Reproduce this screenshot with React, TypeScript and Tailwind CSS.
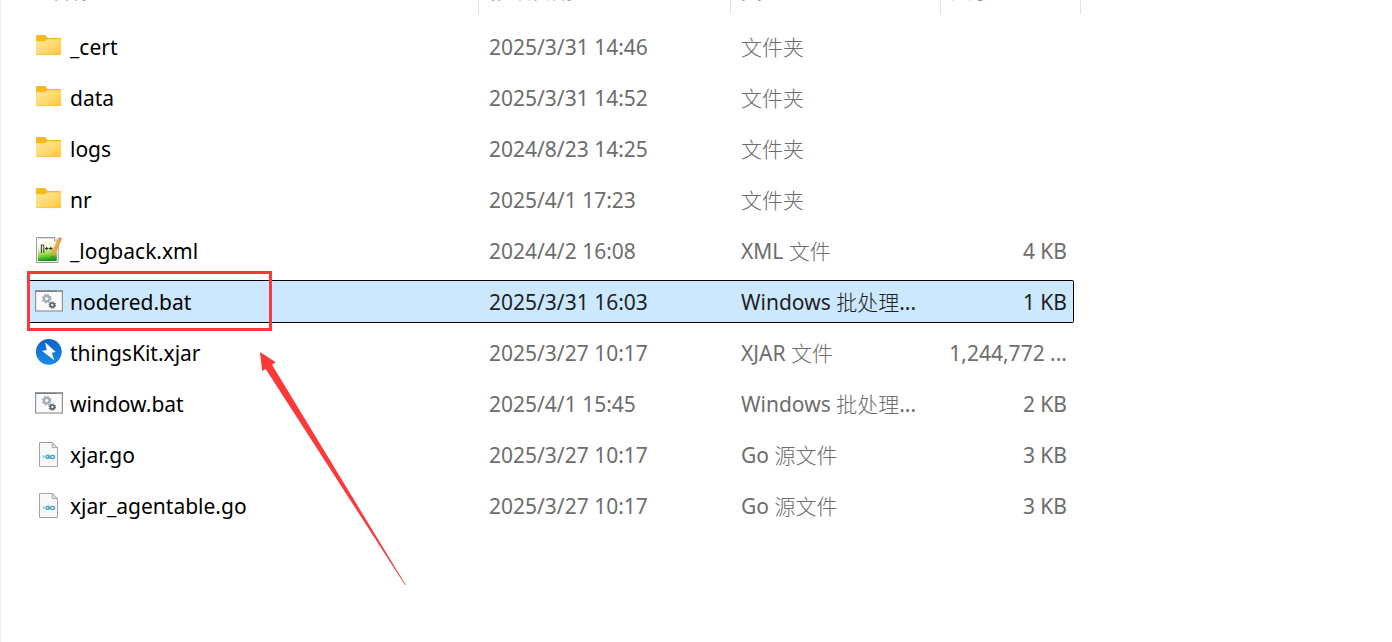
import React from 'react';

type Kind = 'folder' | 'xml' | 'bat' | 'jar' | 'go';

interface Entry {
  name: string;
  modified: string;
  type: string;
  size: string;
  kind: Kind;
  selected?: boolean;
}

const entries: Entry[] = [
  { name: '_cert', modified: '2025/3/31 14:46', type: '文件夹', size: '', kind: 'folder' },
  { name: 'data', modified: '2025/3/31 14:52', type: '文件夹', size: '', kind: 'folder' },
  { name: 'logs', modified: '2024/8/23 14:25', type: '文件夹', size: '', kind: 'folder' },
  { name: 'nr', modified: '2025/4/1 17:23', type: '文件夹', size: '', kind: 'folder' },
  { name: '_logback.xml', modified: '2024/4/2 16:08', type: 'XML 文件', size: '4 KB', kind: 'xml' },
  { name: 'nodered.bat', modified: '2025/3/31 16:03', type: 'Windows 批处理...', size: '1 KB', kind: 'bat', selected: true },
  { name: 'thingsKit.xjar', modified: '2025/3/27 10:17', type: 'XJAR 文件', size: '1,244,772 ...', kind: 'jar' },
  { name: 'window.bat', modified: '2025/4/1 15:45', type: 'Windows 批处理...', size: '2 KB', kind: 'bat' },
  { name: 'xjar.go', modified: '2025/3/27 10:17', type: 'Go 源文件', size: '3 KB', kind: 'go' },
  { name: 'xjar_agentable.go', modified: '2025/3/27 10:17', type: 'Go 源文件', size: '3 KB', kind: 'go' },
];

function FolderIcon() {
  return (
    <svg className="h-7 w-7" viewBox="0 0 28 28" aria-hidden="true">
      <defs>
        <linearGradient id="folderFront" x1="0" y1="0" x2="1" y2="1">
          <stop offset="0" stopColor="#ffe7a0" />
          <stop offset="0.55" stopColor="#ffd96f" />
          <stop offset="1" stopColor="#fec52f" />
        </linearGradient>
      </defs>
      <path d="M1 4.2Q1 3 2.2 3H9.4Q10.3 3 11 3.7L12.6 5.9H24.8Q26 5.9 26 7V20H1Z" fill="#f8b81e" />
      <path d="M1 9.2H9.6Q10.4 9.2 11 8.6L12.4 7.2H24.8Q26 7.2 26 8.2V21.8Q26 23 24.8 23H2.2Q1 23 1 21.8Z" fill="url(#folderFront)" />
      <path d="M1.4 22.6H25.6" stroke="#f1c04a" strokeWidth="0.8" />
    </svg>
  );
}

function XmlIcon() {
  return (
    <svg className="h-7 w-7" viewBox="0 0 28 28" aria-hidden="true">
      <defs>
        <linearGradient id="xmlPage" x1="0" y1="0" x2="0.15" y2="1">
          <stop offset="0" stopColor="#ffffff" />
          <stop offset="0.35" stopColor="#f2f9df" />
          <stop offset="0.65" stopColor="#a5e052" />
          <stop offset="0.88" stopColor="#45bd25" />
          <stop offset="1" stopColor="#169a17" />
        </linearGradient>
      </defs>
      <path d="M1.5 1.5H20L23.2 5V26.5H1.5Z" fill="#fff" stroke="#9a9d9a" />
      <path d="M3 5H21.8V25H3Z" fill="url(#xmlPage)" />
      <path d="M3 2.4H19.5" stroke="#aaa" strokeWidth="1" strokeDasharray="1 1.3" />
      <path d="M19.5 1.5V5H23" fill="#eee" stroke="#999" strokeWidth="0.8" />
      <path d="M6.4 17V8.5M6.4 9H7.7Q8.8 9 8.8 10.2V17" fill="none" stroke="#444" strokeWidth="1.1" />
      <path d="M10 12.5H13.4M11.7 10.8V14.2M14.1 12.5H17.5M15.8 10.8V14.2" stroke="#263426" strokeWidth="1" />
      <path d="M23.6 2.6 26.2 4 19.8 18.2 17 21.4 16.9 17Z" fill="#f4a93c" stroke="#d0923c" strokeWidth="0.6" />
      <path d="M23.6 2.6 24.4 1 27 2.4 26.2 4Z" fill="#dd7468" />
      <path d="M17.1 19.4 17 21.4 18.3 20Z" fill="#333" />
    </svg>
  );
}

function BatIcon() {
  return (
    <svg className="h-7 w-7" viewBox="0 0 28 28" aria-hidden="true">
      <rect x="0.6" y="4" width="26.8" height="20" fill="#fafafa" stroke="#929496" strokeWidth="1.2" />
      <path d="M0 4.2H28" stroke="#7c7e80" strokeWidth="1.6" />
      <path d="M22 4.2H26.5" stroke="#d4d4d4" strokeWidth="0.9" strokeDasharray="1 0.8" />
      <circle cx="11.7" cy="11.6" r="2.8" fill="none" stroke="#a5aeb7" strokeWidth="2.2" />
      <circle cx="11.7" cy="11.6" r="4.2" fill="none" stroke="#a5aeb7" strokeWidth="1.4" strokeDasharray="1.8 1.5" />
      <circle cx="17.3" cy="18" r="2" fill="none" stroke="#5b646c" strokeWidth="1.7" />
      <circle cx="17.3" cy="18" r="3.1" fill="none" stroke="#5b646c" strokeWidth="1.2" strokeDasharray="1.35 1.08" />
    </svg>
  );
}

function JarIcon() {
  return (
    <svg className="h-7 w-7" viewBox="0 0 28 28" aria-hidden="true">
      <defs>
        <linearGradient id="jarDisc" x1="0" y1="0" x2="0" y2="1">
          <stop offset="0" stopColor="#0a62c4" />
          <stop offset="1" stopColor="#1a8be6" />
        </linearGradient>
      </defs>
      <circle cx="13.8" cy="13.8" r="12.9" fill="url(#jarDisc)" />
      <path d="M10 4.2 20.8 14.1 16.8 14.8 19.3 22.2 7 12.9 11.7 12Z" fill="#fff" />
    </svg>
  );
}

function GoIcon() {
  return (
    <svg className="h-7 w-7" viewBox="0 0 28 28" aria-hidden="true">
      <path d="M4.5 2.5H17.2L22.5 7.6V26.5H4.5Z" fill="#f7f8f8" stroke="#a1a4a6" />
      <path d="M17.2 2.5V7.6H22.5Z" fill="#dfe1e2" stroke="#a1a4a6" strokeWidth="0.9" />
      <path d="M7.3 16H10M8 17.3H10" stroke="#7ebcd4" strokeWidth="0.9" />
      <path d="M14.4 15.6Q13.4 14.9 12.2 15.3Q10.9 15.9 11 17.1Q11.2 18.4 12.8 18.4Q14.4 18.3 14.6 16.9H12.8" fill="none" stroke="#419fc0" strokeWidth="1.3" />
      <ellipse cx="17.5" cy="16.9" rx="2" ry="1.6" fill="none" stroke="#419fc0" strokeWidth="1.3" />
    </svg>
  );
}

const icons: Record<Kind, () => React.ReactElement> = {
  folder: FolderIcon,
  xml: XmlIcon,
  bat: BatIcon,
  jar: JarIcon,
  go: GoIcon,
};

function HeaderCell({ label, indent, span }: { label: string; indent: string; span?: number }) {
  return (
    <th scope="col" colSpan={span} className="h-[49px] p-0 text-left align-top font-normal">
      <div className={`h-[46px] border-r border-[#e3e3e3] pt-[7px] ${indent}`}>{label}</div>
    </th>
  );
}

function Row({ entry }: { entry: Entry }) {
  const Icon = icons[entry.kind];
  const selected = entry.selected;
  const fill = selected ? 'border-y border-black bg-[#cce8ff] text-[#1f1f1f]' : 'text-[#6d6d6d]';
  return (
    <tr aria-selected={selected ? true : undefined}>
      <td className={`relative h-[43px] p-0 pl-[7px] ${fill}`}>
        <div className="flex items-center gap-[7px] text-black">
          <span className="pb-0.5">
            <Icon />
          </span>
          <span>{entry.name}</span>
        </div>
        {selected && <div className="absolute -top-[10px] -left-px h-[60px] w-[245px] border-3 border-[#fd3838]" />}
      </td>
      <td className={`p-0 pl-2.5 ${fill}`}>{entry.modified}</td>
      <td className={`p-0 pl-2.5 ${fill}`}>{entry.type}</td>
      <td className={`p-0 text-right ${fill} ${selected ? 'rounded-r-xs border-r pr-1.5' : 'pr-[7px]'}`}>{entry.size}</td>
      <td className="p-0" />
    </tr>
  );
}

export default function App() {
  return (
    <main className="min-h-screen overflow-hidden border-l border-[#f3f3f3] bg-white pl-[27px] font-['Noto_Sans','Noto_Sans_CJK_SC_Light','Noto_Sans_CJK_SC',sans-serif] text-[21px] leading-7">
      <div className="relative">
        <table className="-mt-10 w-[1053px] table-fixed border-separate border-spacing-x-0 border-spacing-y-2 whitespace-nowrap">
          <colgroup>
            <col className="w-[451px]" />
            <col className="w-[252px]" />
            <col className="w-[210px]" />
            <col className="w-[133px]" />
            <col className="w-[7px]" />
          </colgroup>
          <thead className="font-['Noto_Sans_CJK_SC',sans-serif] text-[#4c607a]">
            <tr>
              <HeaderCell label="名称" indent="pl-[22px]" />
              <HeaderCell label="修改日期" indent="pl-2.5" />
              <HeaderCell label="类型" indent="pl-2.5" />
              <HeaderCell label="大小" indent="pl-2.5" span={2} />
            </tr>
          </thead>
          <tbody>
            {entries.map((entry) => (
              <Row key={entry.name} entry={entry} />
            ))}
          </tbody>
        </table>
        <svg className="pointer-events-none absolute top-[392px] left-[232px] h-[234px] w-[147px]" viewBox="0 0 147 234" aria-hidden="true">
          <path d="M0 0 15.7 10.3 12 12.8 145.8 233 145 233 5.7 17 2.2 19Z" fill="#fd3838" />
        </svg>
      </div>
    </main>
  );
}
